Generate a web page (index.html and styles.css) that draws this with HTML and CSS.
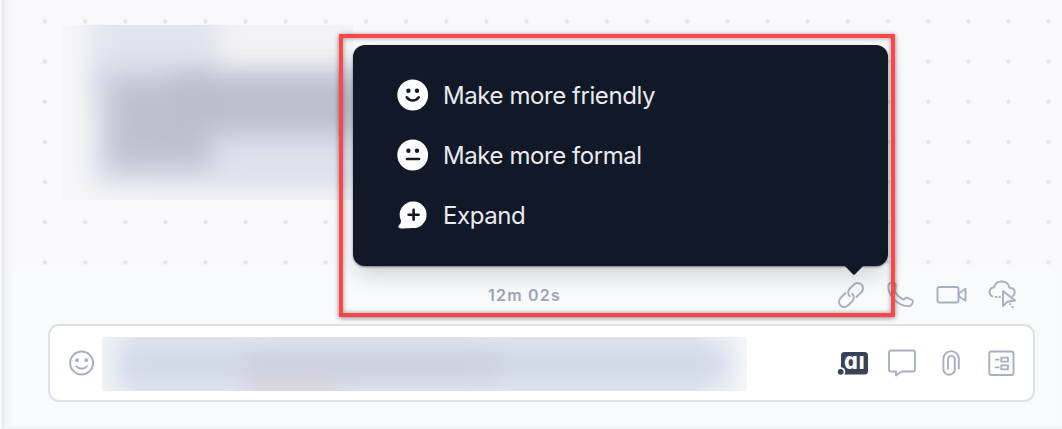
FILE: index.html
```
<!DOCTYPE html>
<html lang="en">
<head>
<meta charset="utf-8">
<title>Conversation</title>
<link rel="stylesheet" href="styles.css">
</head>
<body>
<main class="chat">
  <section class="canvas">
    <svg class="dots" width="1062" height="265" aria-hidden="true">
      <defs><pattern id="dot" x="24.75" y="1.45" width="40.15" height="40.15" patternUnits="userSpaceOnUse"><circle cx="20.08" cy="20.08" r="2.1" fill="#e3e3e6"/></pattern></defs>
      <rect x="25" width="1037" height="265" fill="url(#dot)"/>
    </svg>
    <div class="message">
      <i class="smear head"></i><i class="smear band"></i><i class="smear block"></i><i class="smear tail"></i><i class="smear foot"></i>
    </div>
  </section>

  <div class="toolbar">
    <span class="timer">12m 02s</span>
    <div class="actions">
      <svg class="link" width="28" height="28" viewBox="0 0 28 28"><g transform="rotate(-45 14 14)"><path d="M11.500 8.700H4.500a5.300 5.300 0 0 0 0 10.600h6a5.300 5.300 0 0 0 5.300-5.300M16.500 19.300h7a5.300 5.300 0 0 0 0-10.600h-6a5.300 5.300 0 0 0-5.300 5.300"/></g></svg>
      <svg class="phone" width="30" height="30" viewBox="0 0 30 30"><path d="M5 2.800L8.200 3c1 .1 1.600.9 1.600 1.800l-.1 3.700c0 .8-.7 1.400-1.200 2 1.700 3.700 5.300 7.300 9.200 9.200l2-1.700c.5-.5 1.200-.5 1.800-.2l4.500 2.200c.8.4 1.100 1.100.9 1.900-.6 2.300-2.500 4.300-5 4.200C11.800 25.500 2.500 16.400 2.300 7c0-2.300 1-4 2.700-4.200z"/></svg>
      <svg class="video" width="32" height="20" viewBox="0 0 32 20"><rect x="1.500" y="2" width="21" height="15.500" rx="2"/><path d="M23 8.300l6.500-4.500v12L23 11.500z"/></svg>
      <svg class="cloud" width="30" height="32" viewBox="0 0 30 32"><path d="M4.500 17.300C2.600 16.700 1.600 15 1.600 13c0-2.500 1.700-4.300 4.300-4.500C7 4.800 9.800 2.500 13.500 2.500c4.300 0 7.200 2.400 7.900 6.200 3.200.2 5.200 2 5.300 4.700 0 1.600-.7 2.900-2 3.700"/><path d="M15 12v15l4.300-4.200 7.700-1.300z"/><path class="bits" d="M7 18h2.200m1.500 0h2M21.500 24.500l1.600 1.200m.8 1.500l1.600 1.500"/></svg>
    </div>
  </div>

  <div class="composer">
    <svg class="smile" width="28" height="28" viewBox="0 0 28 28"><circle cx="13.600" cy="14" r="11.500"/><path d="M8.300 17.200c2.600 3.400 8 3.400 10.600 0"/><circle class="eye" cx="9.100" cy="11.200" r="1.900"/><circle class="eye" cx="18.300" cy="11.200" r="1.900"/></svg>
    <div class="draft"><i class="ink"></i><i class="ink grey"></i><i class="ink rose"></i></div>
    <div class="tools">
      <svg class="logo" width="32" height="26" viewBox="0 0 32 26"><rect x="4" y="2" width="27" height="22.500" rx="3.500" fill="#374356"/><circle cx="3.700" cy="21.800" r="4.600" fill="#fff"/><circle cx="3.700" cy="21.800" r="2.900" fill="#374356"/><text x="7" y="19.200" textLength="21" lengthAdjust="spacingAndGlyphs">ɑı</text></svg>
      <svg class="bubble" width="30" height="30" viewBox="0 0 30 30"><path d="M4 2.500h22a2 2 0 0 1 2 2v17a2 2 0 0 1-2 2H14.500L9 27.500v-4H4a2 2 0 0 1-2-2v-17a2 2 0 0 1 2-2z"/></svg>
      <svg class="clip" width="20" height="28" viewBox="0 0 20 28"><path d="M17.800 19.500V9.800a7.700 7.700 0 0 0-15.400 0v10.300a5.700 5.700 0 0 0 11.400 0V10.300a3.400 3.400 0 0 0-6.800 0v9.500"/></svg>
      <svg class="form" width="28" height="28" viewBox="0 0 28 28"><rect x="2.300" y="2.500" width="24.200" height="23.500" rx="2"/><path d="M14.300 8.600h6.600v4h-6.600zm0 7.800h6.600v4h-6.600zM8.800 10.600h2.900M8.800 18.400h2.900"/></svg>
    </div>
  </div>
</main>

<nav class="menu">
  <a class="item"><svg width="32" height="32" viewBox="0 0 32 32"><circle cx="15.700" cy="16" r="15.400" fill="#fff"/><circle cx="11.400" cy="11.800" r="2.200"/><circle cx="20" cy="11.800" r="2.200"/><path class="stroke" d="M9.700 18.300c3 4.300 9 4.300 12 0"/></svg><span>Make more friendly</span></a>
  <a class="item"><svg width="32" height="32" viewBox="0 0 32 32"><circle cx="15.700" cy="16" r="15.400" fill="#fff"/><circle cx="11.400" cy="11.800" r="2.200"/><circle cx="20" cy="11.800" r="2.200"/><path class="stroke" d="M10 20h12"/></svg><span>Make more formal</span></a>
  <a class="item"><svg width="32" height="32" viewBox="0 0 32 32"><path fill="#fff" d="M16.500 2.500a13.300 13.300 0 1 1-.5 26.600c-3 0-9 .7-13 .2-1.600-.2-2.300-1.500-1.300-2.700 1.800-2 2.400-2.800 2.200-5.100A13.300 13.300 0 0 1 16.500 2.500z"/><path class="stroke" d="M11.600 15.800h10M16.600 10.800v10"/></svg><span>Expand</span></a>
</nav>
<div class="highlight"></div>
</body>
</html>
```
FILE: styles.css
```
* { box-sizing: border-box; }
body {
  margin: 0;
  width: 1062px;
  height: 429px;
  overflow: hidden;
  position: relative;
  background: #f8fafc;
  font-family: Inter, sans-serif;
}
svg { display: block; flex: none; overflow: visible; }
.chat {
  display: flex;
  flex-direction: column;
  height: 429px;
  box-shadow: inset 0 -2px 2px #f2f3f5;
}
.chat::before {
  content: "";
  position: absolute;
  left: 0;
  top: 0;
  width: 14px;
  height: 427px;
  background: linear-gradient(90deg, #f9fafc 0 1px, #e5e7eb 3px, #eef0f2 4px, #f5f6f8 8px, #f9fafc00 14px);
}
.canvas {
  height: 265px;
  padding: 25px 0 0 63px;
  background: #f9f9fc;
}
.dots { position: absolute; left: 0; top: 0; }
.message {
  position: relative;
  width: 290px;
  height: 175px;
  overflow: hidden;
  background: linear-gradient(90deg, #f6f6f9, #f3f3f6 40%);
}
.smear, .ink { position: absolute; display: block; }
.smear { filter: blur(11px); }
.head { left: 29px; top: -20px; width: 127px; height: 90px; background: #e0e4ed; }
.band { left: 32px; top: 42px; width: 330px; height: 117px; background: #dadeea; }
.block { left: 46px; top: 53px; width: 100px; height: 88px; background: #bec1cd; filter: blur(13px); }
.tail { left: 110px; top: 51px; width: 245px; height: 57px; background: #bbbecb; filter: blur(13px); }
.foot { left: 160px; top: 132px; width: 220px; height: 22px; background: #e1e4ee; }

.toolbar {
  position: relative;
  height: 59px;
  display: flex;
  align-items: center;
  padding-left: 488px;
}
.timer {
  width: 349px;
  color: #9ca6b7;
  font-size: 16px;
  font-weight: 600;
  letter-spacing: 1.2px;
}
.actions, .tools { display: flex; align-items: center; }
.actions svg, .tools svg, .smile {
  fill: none;
  stroke: #a6b0c0;
  stroke-width: 1.9;
  stroke-linejoin: round;
  stroke-linecap: round;
}
.phone { margin-left: 21px; }
.video { margin-left: 20px; }
.cloud { margin-left: 20px; }
.actions .bits { stroke-linecap: butt; }

.composer {
  position: relative;
  height: 78px;
  margin: 0 27px 0 48px;
  padding: 0 18px;
  display: flex;
  align-items: center;
  background: #fff;
  border: 2px solid #dbe1e9;
  border-radius: 11px;
}
.smile .eye { fill: #a6b0c0; stroke: none; }
.draft {
  position: relative;
  width: 645px;
  height: 54px;
  margin: 2px 0 0 6px;
  overflow: hidden;
  background: linear-gradient(90deg, #f0f3f7, #e1e6f0 5%, #e1e6f0 92%, #f5f7fb);
}
.ink { left: 20px; top: 13px; width: 605px; height: 28px; background: #ced7e5; filter: blur(12px); }
.ink.grey { left: 145px; top: 20px; width: 250px; height: 18px; background: #c9cddb; }
.ink.rose { left: 145px; top: 44px; width: 90px; height: 14px; background: #dacbd6; }
.tools { margin-left: 90px; }
.tools .logo, .logo * { stroke: none; }
.logo text { fill: #fff; font: bold 23.5px "DejaVu Sans", sans-serif; }
.bubble { margin-left: 18px; }
.clip { margin-left: 24px; }
.form { margin-left: 26px; }

.menu {
  position: absolute;
  left: 353px;
  top: 45px;
  width: 535px;
  height: 221px;
  padding: 20px 44px;
  background: #111827;
  border-radius: 12px;
  box-shadow: 0 1px 2px #11182780, 0 12px 22px -4px #11182730;
}
.menu::after {
  content: "";
  position: absolute;
  left: 490px;
  top: 219px;
  width: 22px;
  height: 11px;
  background: #111827;
  clip-path: polygon(0 0, 100% 0, 56% 90%, 50% 100%, 44% 90%);
}
.item {
  height: 60px;
  display: flex;
  align-items: center;
  gap: 14px;
  color: #e9ebee;
  font-size: 24px;
  letter-spacing: -.43px;
}
.item svg { fill: #111827; }
.item .stroke { fill: none; stroke: #111827; stroke-width: 2.6; stroke-linecap: round; }
.highlight {
  position: absolute;
  left: 339px;
  top: 34px;
  width: 556px;
  height: 283px;
  border: 4px solid #ff4545;
  box-shadow: 0 1px 5px #0007, inset 0 0 5px #0006;
}
```
